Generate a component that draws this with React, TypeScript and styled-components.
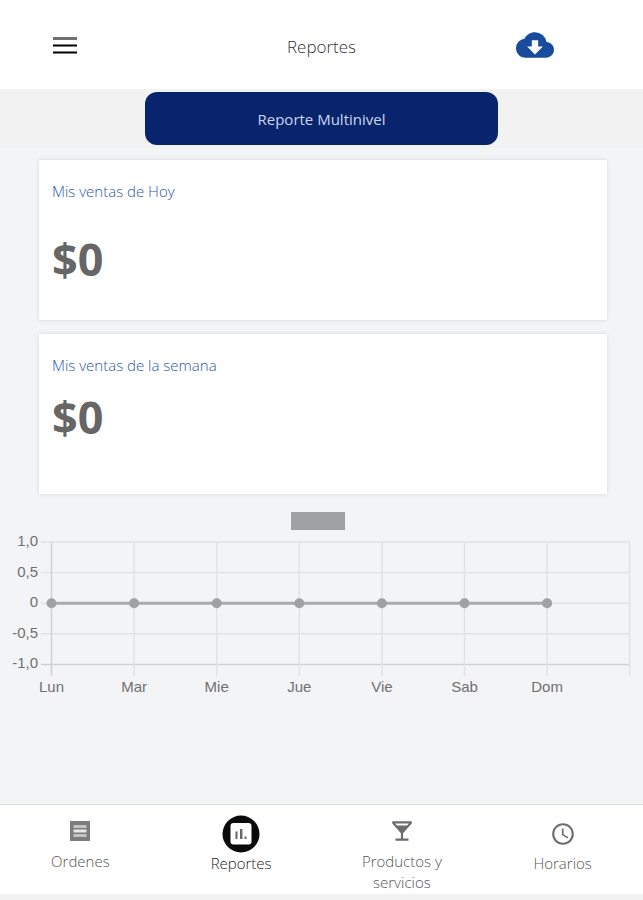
import React from "react";
import styled, { createGlobalStyle } from "styled-components";
import { MdAccessTime, MdCloudDownload, MdLocalBar } from "react-icons/md";

const GlobalStyle = createGlobalStyle`
  * {
    box-sizing: border-box;
  }

  body {
    background: #f3f4f6;
    color: #333;
    font-family: "Open Sans", "Noto Sans", sans-serif;
    margin: 0;
  }
`;

const Page = styled.div`
  display: flex;
  flex-direction: column;
  min-height: 100vh;
`;

const Header = styled.header`
  align-items: center;
  background: #fff;
  display: grid;
  grid-template-columns: 1fr auto 1fr;
  height: 89px;
  padding: 0 8%;
`;

const IconButton = styled.button<{ $end?: boolean }>`
  background: none;
  border: 0;
  color: #184b9c;
  display: flex;
  justify-self: ${({ $end }) => ($end ? "end" : "start")};
  margin-right: ${({ $end }) => ($end ? "38px" : "0")};
  padding: 0;
`;

const Title = styled.h1`
  font-size: 17px;
  font-weight: 300;
  line-height: 24px;
  margin: 0;
  padding-top: 4px;
`;

const ActionBar = styled.div`
  background: #f2f2f2;
  display: flex;
  justify-content: center;
  padding: 3px 0;
`;

const PrimaryButton = styled.button`
  background: #08246c;
  border: 0;
  border-radius: 12px;
  color: #cdd6ee;
  font-family: inherit;
  font-size: 15px;
  height: 53px;
  width: 55%;
`;

const Main = styled.main`
  flex: 1;
`;

const Cards = styled.div`
  display: flex;
  flex-direction: column;
  gap: 14px;
  padding: 12px 36px 0 39px;
`;

const Card = styled.section`
  background: #fff;
  box-shadow: 0 0 4px rgba(0, 0, 0, 0.12);
  height: 160px;
  padding: 19px 13px;
`;

const CardTitle = styled.h2`
  color: #2c55ad;
  font-size: 15px;
  font-weight: 300;
  line-height: 24px;
  margin: 0;
`;

const Amount = styled.p<{ $spaced?: boolean }>`
  color: #666;
  font-size: 45px;
  font-weight: 700;
  line-height: 56px;
  margin: ${({ $spaced }) => ($spaced ? "28px" : "12px")} 0 0;
`;

const Chart = styled.svg`
  display: block;
  font-family: "Liberation Sans", Arial, sans-serif;
  font-size: 15px;
  margin-top: 8px;
  width: 100%;
`;

const TabBar = styled.nav`
  background: #fff;
  border-bottom: 6px solid #f2f2f2;
  border-top: 1px solid #dcdddf;
  display: grid;
  grid-template-columns: repeat(4, 1fr);
  height: 96px;
`;

const Tab = styled.a<{ $active?: boolean }>`
  align-items: center;
  color: ${({ $active }) => ($active ? "#222" : "#555")};
  display: flex;
  flex-direction: column;
  font-size: 15px;
  font-weight: 300;
  line-height: 21px;
  padding: 10px 32px 0;
  text-align: center;
  text-decoration: none;
`;

const TabIcon = styled.span<{ $tall?: boolean }>`
  align-items: center;
  color: #6c6c6c;
  display: flex;
  height: ${({ $tall }) => ($tall ? "38px" : "32px")};
  margin-bottom: ${({ $tall }) => ($tall ? "0" : "4px")};
`;

const MenuIcon = () => (
  <svg width="26" height="18" viewBox="0 0 26 18">
    <path d="M2 2.5h24" stroke="#707070" strokeWidth="3" />
    <path d="M2 9.5h24M2 16.5h24" stroke="#000" strokeWidth="2.2" />
  </svg>
);

const OrdersIcon = () => (
  <svg width="20" height="20" viewBox="0 0 20 20">
    <path d="M0 0h20v20H0z" fill="#7d7d7d" />
    <path d="M3.5 4h13v3h-13zM3.5 13h13v3h-13z" fill="#c4c4c4" />
    <path d="M3.5 8.5h13v3h-13z" fill="#e8e8e8" />
  </svg>
);

const ReportsIcon = () => (
  <svg width="38" height="38" viewBox="0 0 38 38">
    <circle cx="19" cy="19" r="18.5" fill="#0a0a0a" />
    <rect x="8.5" y="8" width="21" height="21.5" rx="3" fill="#fff" />
    <path d="M13.5 16.5h2v7.5h-2zM18 14h2.4v10H18zM22.5 21.5h2V24h-2z" fill="#666" />
  </svg>
);

const days = ["Lun", "Mar", "Mie", "Jue", "Vie", "Sab", "Dom"];
const ticks = ["1,0", "0,5", "0", "-0,5", "-1,0"];

const dayX = (i: number) => 51.5 + i * 82.6;
const tickY = (i: number) => 40 + i * 30.6;

const SalesChart = () => (
  <Chart viewBox="0 0 643 204" role="img" aria-label="Ventas por día">
    <rect x="291" y="10" width="54" height="18" fill="#a0a1a3" />
    {ticks.map((tick, i) => (
      <g key={tick}>
        <path
          d={`M41 ${tickY(i)}H630`}
          stroke={i === 4 ? "#d0d1d3" : "#e1e2e4"}
          strokeWidth="1.5"
        />
        <text x="38" y={tickY(i) + 4} textAnchor="end" fill="#707070">
          {tick}
        </text>
      </g>
    ))}
    {[...days, ""].map((day, i) => (
      <g key={day}>
        <path
          d={`M${dayX(i)} 40V174`}
          stroke={i === 0 ? "#d0d1d3" : "#e1e2e4"}
          strokeWidth="1.5"
        />
        <text x={dayX(i)} y="190" textAnchor="middle" fill="#707070">
          {day}
        </text>
      </g>
    ))}
    <path d={`M${dayX(0)} ${tickY(2)}H${dayX(6)}`} stroke="#a9aaac" strokeWidth="3" />
    {days.map((day, i) => (
      <circle key={day} cx={dayX(i)} cy={tickY(2)} r="5" fill="#a0a1a3" />
    ))}
  </Chart>
);

const tabs = [
  { label: "Ordenes", href: "#ordenes", icon: <OrdersIcon /> },
  {
    label: "Reportes",
    href: "#reportes",
    icon: <ReportsIcon />,
    active: true,
    tall: true,
  },
  {
    label: "Productos y servicios",
    href: "#productos",
    icon: <MdLocalBar size={26} />,
  },
  {
    label: "Horarios",
    href: "#horarios",
    icon: <MdAccessTime size={26} />,
    tall: true,
  },
];

const App = () => (
  <Page>
    <GlobalStyle />
    <Header>
      <IconButton aria-label="Menú">
        <MenuIcon />
      </IconButton>
      <Title>Reportes</Title>
      <IconButton $end aria-label="Descargar">
        <MdCloudDownload size={38} />
      </IconButton>
    </Header>
    <ActionBar>
      <PrimaryButton>Reporte Multinivel</PrimaryButton>
    </ActionBar>
    <Main>
      <Cards>
        <Card>
          <CardTitle>Mis ventas de Hoy</CardTitle>
          <Amount $spaced>$0</Amount>
        </Card>
        <Card>
          <CardTitle>Mis ventas de la semana</CardTitle>
          <Amount>$0</Amount>
        </Card>
      </Cards>
      <SalesChart />
    </Main>
    <TabBar>
      {tabs.map(({ label, href, icon, active, tall }) => (
        <Tab key={href} href={href} $active={active}>
          <TabIcon $tall={tall}>{icon}</TabIcon>
          {label}
        </Tab>
      ))}
    </TabBar>
  </Page>
);

export default App;
